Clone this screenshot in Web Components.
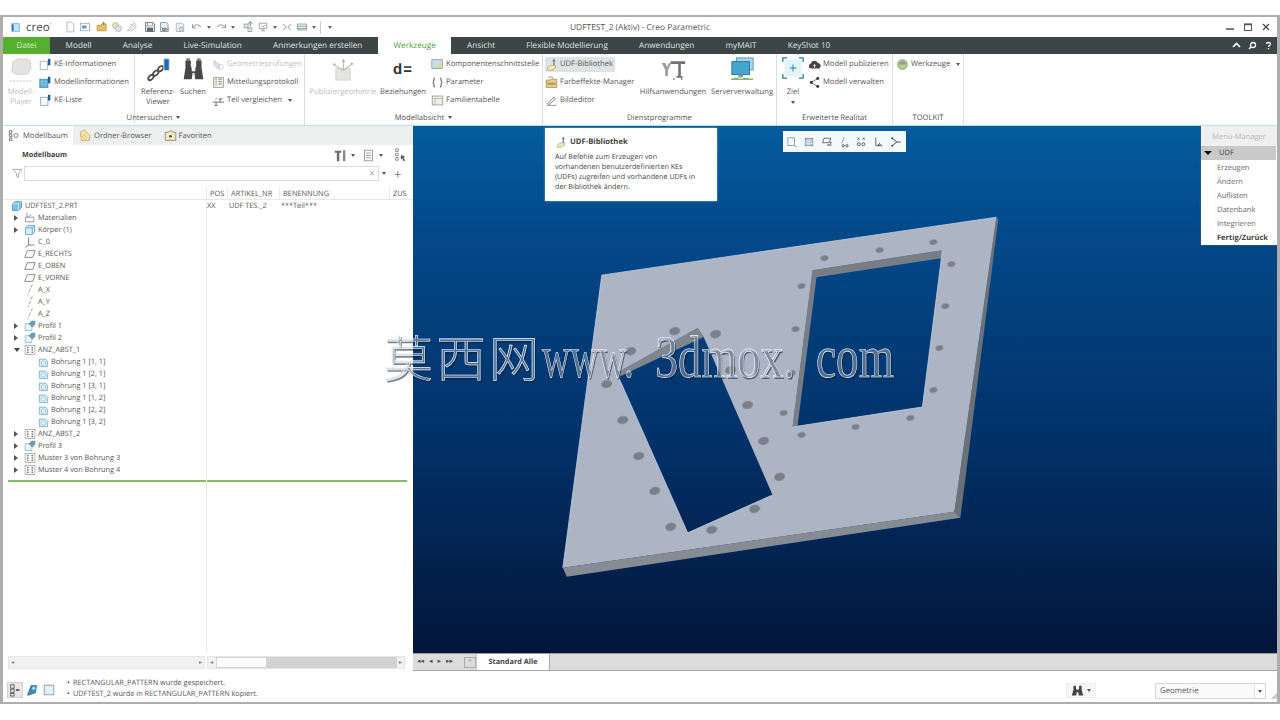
<!DOCTYPE html>
<html lang="de">
<head>
<meta charset="utf-8">
<title>Creo Parametric</title>
<style>
html, body { margin: 0; height: 720px; overflow: hidden; background: #fff; }
body { font: 7.6px/10px "Open Sans", "Liberation Sans", sans-serif; color: #555; text-rendering: geometricPrecision; }
</style>
</head>
<body>
<creo-app>
  <title-bar slot="top"></title-bar>
  <tab-bar slot="top"></tab-bar>
  <creo-ribbon slot="top">
    <ribbon-group label="Untersuchen" arrow w="302">
      <ribbon-big w="36" icon="player" off>Modell-<br>Player</ribbon-big>
      <ribbon-col w="95">
        <ribbon-item icon="keinfo">KE-Informationen</ribbon-item>
        <ribbon-item icon="modinfo">Modellinformationen</ribbon-item>
        <ribbon-item icon="keliste">KE-Liste</ribbon-item>
      </ribbon-col>
      <ribbon-sep></ribbon-sep>
      <ribbon-big w="38" ml="4" icon="chain">Referenz-<br>Viewer</ribbon-big>
      <ribbon-big w="32" icon="binoc">Suchen</ribbon-big>
      <ribbon-col w="90" ml="3">
        <ribbon-item icon="geo" off>Geometrieprüfungen</ribbon-item>
        <ribbon-item icon="proto">Mitteilungsprotokoll</ribbon-item>
        <ribbon-item icon="compare" arrow>Teil vergleichen</ribbon-item>
      </ribbon-col>
    </ribbon-group>
    <ribbon-group label="Modellabsicht" arrow w="238">
      <ribbon-big w="70" ml="3" icon="publish" off>Publiziergeometrie</ribbon-big>
      <ribbon-big w="50" glyph="d=">Beziehungen</ribbon-big>
      <ribbon-col w="112" ml="3">
        <ribbon-item icon="compif">Komponentenschnittstelle</ribbon-item>
        <ribbon-item icon="param">Parameter</ribbon-item>
        <ribbon-item icon="family">Familientabelle</ribbon-item>
      </ribbon-col>
    </ribbon-group>
    <ribbon-group label="Dienstprogramme" w="234">
      <ribbon-col w="94" ml="2">
        <ribbon-item icon="udf" hot>UDF-Bibliothek</ribbon-item>
        <ribbon-item icon="folder">Farbeffekte-Manager</ribbon-item>
        <ribbon-item icon="pencil">Bildeditor</ribbon-item>
      </ribbon-col>
      <ribbon-big w="68" icon="tools">Hilfsanwendungen</ribbon-big>
      <ribbon-big w="66" ml="2" icon="server">Serververwaltung</ribbon-big>
    </ribbon-group>
    <ribbon-group label="Erweiterte Realität" w="116">
      <ribbon-big w="30" ml="1" icon="ziel" s="22" drop>Ziel</ribbon-big>
      <ribbon-col w="82">
        <ribbon-item icon="cloud">Modell publizieren</ribbon-item>
        <ribbon-item icon="share">Modell verwalten</ribbon-item>
      </ribbon-col>
    </ribbon-group>
    <ribbon-group label="TOOLKIT" w="71">
      <ribbon-col w="68" ml="3">
        <ribbon-item icon="werk" arrow>Werkzeuge</ribbon-item>
      </ribbon-col>
    </ribbon-group>
  </creo-ribbon>

  <model-panel slot="left">
    <tree-row lvl="root" icon="part" pos="XX" nr="UDF TES._2" name="***Teil***">UDFTEST_2.PRT</tree-row>
    <tree-row arrow="r" icon="material">Materialien</tree-row>
    <tree-row arrow="r" icon="body">Körper (1)</tree-row>
    <tree-row icon="csys">C_0</tree-row>
    <tree-row icon="plane">E_RECHTS</tree-row>
    <tree-row icon="plane">E_OBEN</tree-row>
    <tree-row icon="plane">E_VORNE</tree-row>
    <tree-row icon="axis">A_X</tree-row>
    <tree-row icon="axis">A_Y</tree-row>
    <tree-row icon="axis">A_Z</tree-row>
    <tree-row arrow="r" icon="profile">Profil 1</tree-row>
    <tree-row arrow="r" icon="profile">Profil 2</tree-row>
    <tree-row arrow="d" icon="pattern">ANZ_ABST_1</tree-row>
    <tree-row lvl="1" icon="hole">Bohrung 1 [1, 1]</tree-row>
    <tree-row lvl="1" icon="hole">Bohrung 1 [2, 1]</tree-row>
    <tree-row lvl="1" icon="hole">Bohrung 1 [3, 1]</tree-row>
    <tree-row lvl="1" icon="hole">Bohrung 1 [1, 2]</tree-row>
    <tree-row lvl="1" icon="hole">Bohrung 1 [2, 2]</tree-row>
    <tree-row lvl="1" icon="hole">Bohrung 1 [3, 2]</tree-row>
    <tree-row arrow="r" icon="pattern">ANZ_ABST_2</tree-row>
    <tree-row arrow="r" icon="profile">Profil 3</tree-row>
    <tree-row arrow="r" icon="pattern">Muster 3 von Bohrung 3</tree-row>
    <tree-row arrow="r" icon="pattern">Muster 4 von Bohrung 4</tree-row>
  </model-panel>

  <graphics-view slot="right">
    <udf-tooltip heading="UDF-Bibliothek">Auf Befehle zum Erzeugen von<br>vorhandenen benutzerdefinierten KEs<br>(UDFs) zugreifen und vorhandene UDFs in<br>der Bibliothek ändern.</udf-tooltip>
    <view-toolbar></view-toolbar>
    <menu-manager></menu-manager>
  </graphics-view>

  <status-bar slot="bottom"></status-bar>
  <water-mark slot="over"></water-mark>
</creo-app>

<script>
const ICONS = {
  logo: '<rect x="2" y="2" width="12" height="12" fill="#4aa3d8"/><rect x="5" y="3" width="8" height="10" fill="#bfe3f5"/><rect x="3" y="4" width="2" height="8" fill="#2a6fa8"/>',
  qnew: '<path d="M4 1.5h6l3 3v10H4z" fill="#fff" stroke="#9aa3ab"/>',
  qopenw: '<rect x="2" y="3" width="12" height="10" fill="#fff" stroke="#9aa3ab"/><rect x="4" y="6" width="6" height="4" fill="#4e9bc7"/>',
  qfolder: '<path d="M1.5 6h5l1-2h6v9h-12z" fill="#e6c15e" stroke="#b08a35"/><path d="M10 1v4M8 3h4" stroke="#5a8f3a"/>',
  qsets: '<circle cx="6" cy="6" r="4" fill="#eadfb8" stroke="#b9b08a"/><circle cx="10" cy="10" r="4" fill="#dde6ea" stroke="#9db1ba"/>',
  qswitch: '<path d="M2 13l6-9 6 4-6 5z" fill="#ecebe2" stroke="#b9b9b0"/><path d="M10 2l3 3" stroke="#8a8a8a"/>',
  qsave: '<path d="M2 2h10l2 2v10H2z" fill="#dfe4e8" stroke="#5c6670"/><rect x="5" y="2.5" width="6" height="4" fill="#fff" stroke="#5c6670" stroke-width=".6"/><rect x="4" y="9" width="8" height="5" fill="#5c6670"/>',
  qsaveas: '<path d="M2 2h8l2 2v10H2z" fill="#e9edef" stroke="#79848c"/><rect x="4" y="9" width="6" height="5" fill="#89939b"/><path d="M9 9l5 5M14 9l-3 3" stroke="#888"/>',
  qsave2: '<path d="M3 3h8l2 2v9H3z" fill="#e9edef" stroke="#a2abb2"/><circle cx="10" cy="11" r="3" fill="#cfd6da" stroke="#a2abb2"/>',
  qundo: '<path d="M3 8c2-4 7-4 10 0" fill="none" stroke="#9aa3ab" stroke-width="1.4"/><path d="M2 4v5h5" fill="none" stroke="#9aa3ab" stroke-width="1.4"/>',
  qredo: '<path d="M13 8C11 4 6 4 3 8" fill="none" stroke="#9aa3ab" stroke-width="1.4"/><path d="M14 4v5H9" fill="none" stroke="#9aa3ab" stroke-width="1.4"/>',
  qregen: '<path d="M3 4h5v5H3zM8 9h5v5H8z" fill="#e8eff2" stroke="#7f8d96"/><path d="M11 1v6M8.5 3.5l2.5-2.5 2.5 2.5" fill="none" stroke="#5a8f3a" stroke-width="1.3"/>',
  qregen2: '<path d="M3 3h10v7H3z" fill="none" stroke="#7f8d96"/><path d="M5 13h6M8 10v3" stroke="#7f8d96"/><path d="M6 6l2 2 3-3" fill="none" stroke="#6ca34a"/>',
  qwin: '<path d="M3 4l4 4-4 4M13 4L9 8l4 4" fill="none" stroke="#808a92" stroke-width="1.2"/>',
  qlist: '<path d="M2 4h12v8H2z" fill="#f2f4f5" stroke="#7f8d96"/><path d="M2 7h12M2 10h12" stroke="#5da05f"/>',
  player: '<path d="M4 5l5-3h10l3 2 1 8-4 6H7L3 15z" fill="#e3e3e3" stroke="#d4d4d4"/><path d="M1 25h24" stroke="#bbb" stroke-dasharray="2 1.4"/>',
  keinfo: '<rect x="1.5" y="4" width="9" height="10" fill="#fff" stroke="#8eb2c8"/><rect x="11" y="1" width="3" height="8" fill="#1e5f99"/>',
  modinfo: '<rect x="1" y="4" width="10" height="10" fill="#58aee0" stroke="#3b88b8"/><path d="M1 7h10M1 10h10M4 4v10M8 4v10" stroke="#a5d5ef" stroke-width=".6"/><rect x="11" y="1" width="3" height="8" fill="#1e5f99"/>',
  keliste: '<rect x="2" y="4" width="9" height="10" fill="#f3f8fb" stroke="#7ea9c4"/><rect x="11" y="1" width="3" height="7" fill="#1e5f99"/>',
  chain: '<g fill="none" stroke="#4e4a47" stroke-width="2"><ellipse cx="5.5" cy="23" rx="3.5" ry="2.2" transform="rotate(-45 5.5 23)"/><ellipse cx="11" cy="18" rx="3.5" ry="2.2" transform="rotate(-45 11 18)"/><ellipse cx="16.5" cy="13" rx="3.5" ry="2.2" transform="rotate(-45 16.5 13)"/></g><rect x="20" y="2" width="6" height="13" fill="#1d6ab0" stroke="#cfe3f1"/>',
  binoc: '<path d="M5 4h6v6l1 3v3h4v-3l1-3V4h6v8l2 13h-9l-1-7h-2l-1 7H3l2-13z" fill="#4a4846"/><rect x="6" y="1.5" width="4" height="3" fill="#7d7a76"/><rect x="18" y="1.5" width="4" height="3" fill="#7d7a76"/>',
  geo: '<path d="M3 3l7 6-2 5-6-6z" fill="#e0e3e4" stroke="#c2c6c8"/><circle cx="11" cy="11" r="3" fill="none" stroke="#cbcfd1"/>',
  proto: '<rect x="2" y="2" width="12" height="12" fill="#f1efe5" stroke="#9a9a8c"/><path d="M4 4h2M4 7h2M4 10h2M8 4h4M8 7h4M8 10h4" stroke="#777"/>',
  compare: '<path d="M1 10h14M5 10v4M3 14h4M10 6v4M8 6h5" stroke="#555" fill="none"/><path d="M4 7l2-2" stroke="#4f9a3d"/>',
  publish: '<rect x="5" y="12" width="15" height="12" fill="#e4e4e2" stroke="#d4d4d2"/><path d="M13 14V3M13 14l9-7M13 14L3 8" stroke="#bdbdb9" stroke-width="1.3"/><path d="M11 5l2-3 2 3M20 6l3 0-1 3M4 6l-2 2 3 1" fill="#aeaeaa"/>',
  compif: '<rect x="1" y="2" width="13" height="11" fill="#c7dfe8" stroke="#8a9ca4"/><path d="M2 12l5-6 3 3 3-3v6z" fill="#cfe0a8"/>',
  param: '<path d="M5 2C3 2 4 7 2.5 8 4 9 3 14 5 14M11 2c2 0 1 5 2.5 6C12 9 13 14 11 14" fill="none" stroke="#3d3d3d" stroke-width="1.2"/>',
  family: '<rect x="1.5" y="2.5" width="13" height="11" fill="#f1efe9" stroke="#9a9a92"/><path d="M1.5 5.5h13M5 5.5v8" stroke="#b4b4aa"/>',
  udf: '<path d="M3 12l4-3h6v3l-4 3H3z" fill="#f0e6c0" stroke="#b9ab7a"/><path d="M11 9V2" stroke="#5f7f9f" stroke-width="1.6"/><path d="M9 4l2-3 2 3" fill="#5f7f9f"/>',
  folder: '<path d="M1.5 5h5l1-1h7v10h-13z" fill="#e9d08e" stroke="#a98a45"/><path d="M5 3V1h4v3" fill="#fff" stroke="#8f8f8f"/><rect x="3" y="8" width="10" height="3" fill="#7a6a48" opacity=".5"/>',
  pencil: '<path d="M2 14h12" stroke="#7e8f6d"/><path d="M3 12l8-8 2 2-8 7z" fill="#fff" stroke="#666"/>',
  tools: '<path d="M11 5h17v3h-5v14h2v2h-7v-2h2V8h-9z" fill="#6f7470"/><path d="M1 7h4l2 5 2-5h3l-4 8v7H5v-7z" fill="#979c98"/><circle cx="15" cy="25.5" r="1" fill="#777"/><circle cx="24" cy="25.5" r="1" fill="#777"/>',
  server: '<rect x="7" y="1" width="18" height="13" fill="#a9d3ea" stroke="#5d95b0"/><rect x="2" y="5" width="19" height="14" fill="#45a5cf" stroke="#2f7596"/><rect x="9" y="19" width="5" height="3" fill="#7f9a9f"/><path d="M1 24h24" stroke="#79b84e" stroke-width="1.5"/><path d="M4 23h5M14 23h6" stroke="#888"/>',
  ziel: '<rect x="3" y="3" width="20" height="20" fill="#e3f3f7"/><path d="M1 6V1h5M20 1h5v5M25 20v5h-5M6 25H1v-5" fill="none" stroke="#2d7f94" stroke-width="1.5"/><path d="M13 9v8M9 13h8" stroke="#2d8aa0" stroke-width="1.2"/>',
  cloud: '<path d="M4 13a3.2 3.2 0 0 1-.5-6.3A4.5 4.5 0 0 1 12 6a3.5 3.5 0 0 1 0 7z" fill="#444"/><path d="M8 12V8M6.5 9.5L8 8l1.5 1.5" stroke="#fff" fill="none"/>',
  share: '<path d="M12 3L4 8l8 5" fill="none" stroke="#555"/><circle cx="12" cy="3" r="1.8" fill="#333"/><circle cx="4" cy="8" r="1.8" fill="#333"/><circle cx="12" cy="13" r="1.8" fill="#333"/>',
  werk: '<circle cx="8" cy="8" r="6" fill="#b7cc8f" stroke="#7f9a63"/><path d="M4 8a4 4 0 0 1 8 0" fill="#9a9d94"/>',
  part: '<path d="M2 5l4-3h8v8l-4 4H2z" fill="#7cc2e6" stroke="#3d8fbc"/><path d="M2 5h8v9M10 5l4-3" fill="none" stroke="#d8eef8"/>',
  material: '<path d="M4 1v6M2 7h11v6H2z" fill="none" stroke="#7b7b7b"/><path d="M4 7l6-3" stroke="#5ea0c0"/>',
  body: '<path d="M2 5l3-3h9v9l-3 3H2z" fill="#d7ecf6" stroke="#4b98c2"/><path d="M2 5h9v9M11 5l3-3" fill="none" stroke="#4b98c2"/>',
  csys: '<path d="M6 2v10h8M6 12l-4 3" fill="none" stroke="#666"/><circle cx="6" cy="12" r="1" fill="#b58a3a"/>',
  plane: '<path d="M4.5 3.5H15l-3.5 9H1z" fill="#fbfbfb" stroke="#6b6b6b"/>',
  axis: '<path d="M11 1L5 15" stroke="#666" stroke-dasharray="3 1.5 1 1.5"/>',
  profile: '<rect x="1.5" y="5" width="9" height="9" fill="#eaf4f9" stroke="#7fb6d2"/><path d="M6 5l4-4h5v5l-4 4z" fill="#6b9eb6"/>',
  pattern: '<rect x="1.5" y="2" width="13" height="12" fill="#fff" stroke="#9a9a9a"/><path d="M4 5h2M10 5h2M4 8h2M10 8h2M4 11h2M10 11h2" stroke="#333" stroke-width="1.3"/>',
  hole: '<path d="M2 3h9l3 3v8H2z" fill="#d3e9f3" stroke="#62a6c6"/><circle cx="8" cy="9" r="3" fill="#f4f4ea" stroke="#67a6bf" stroke-dasharray="2 1"/>',
  tabtree: '<path d="M3 2h3v3H3zM3 6.5h3v3H3zM3 11h3v3H3z" fill="none" stroke="#666"/><circle cx="11" cy="8" r="2.5" fill="none" stroke="#666"/>',
  tabfolder: '<path d="M1.5 4l5-3 7 7-1 6H3z" fill="#f3e2ac" stroke="#c5a75b"/><path d="M5 6l5 5M4 9l4 4" stroke="#d6bb72"/>',
  tabfav: '<path d="M1.5 4h4l1-1.5h4l1 1.5h3v10h-13z" fill="#f3e8c4" stroke="#8d8463"/><circle cx="8" cy="9" r="1.6" fill="#444"/>',
  hammer: '<path d="M1 2h8v2.5H6.5V15h-3V4.5H1z" fill="#6e6c67"/><path d="M11 1.5h3V15h-3z" fill="#8a8882"/>',
  listdoc: '<rect x="3" y="1.5" width="10" height="13" fill="#fff" stroke="#8c8c8c"/><path d="M5 5h6M5 8h6M5 11h6" stroke="#8c8c8c"/>',
  treeset: '<path d="M3 1h3v3H3zM3 6h3v3H3zM3 11h3v3H3z" fill="none" stroke="#888"/><path d="M9 8l5 2-2 1 2 3-2 1-1-3-2 1z" fill="#555"/>',
  funnel: '<path d="M1.5 2h13L9.5 8v6l-3-2V8z" fill="#fff" stroke="#8a8a8a"/>',
  v1: '<rect x="2.5" y="2.5" width="9" height="10" fill="none" stroke="#7d8b94"/><circle cx="13" cy="14" r=".8" fill="#666"/>',
  v2: '<rect x="3" y="3" width="10" height="10" fill="#b9cdd8" stroke="#6d8a9b"/><path d="M3 7h10M3 10h10M7 3v10" stroke="#e8f0f4" stroke-width=".7"/>',
  v3: '<path d="M4 3h9l-2 6H2z" fill="none" stroke="#444"/><path d="M8 12h6" stroke="#444" stroke-width="1.3"/><circle cx="13" cy="9" r="1.2" fill="#666"/>',
  v4: '<path d="M8 2L5 10" stroke="#444" stroke-dasharray="2 1"/><circle cx="7" cy="13" r="1.5" fill="none" stroke="#333"/><circle cx="12" cy="13" r="1.5" fill="none" stroke="#333"/>',
  v5: '<path d="M3 2l3 3M6 2L3 5M10 2l3 3M13 2l-3 3" stroke="#444"/><circle cx="5" cy="11" r="2" fill="none" stroke="#333"/><circle cx="11" cy="11" r="2" fill="none" stroke="#333"/>',
  v6: '<path d="M5 2v11h9" fill="none" stroke="#444"/><path d="M9 9l3 3" stroke="#444"/><circle cx="9" cy="12" r="1.2" fill="#444"/>',
  v7: '<path d="M3 3l6 5-6 5M9 8h5" fill="none" stroke="#333" stroke-width="1.2"/><circle cx="3" cy="3" r="1.2" fill="#333"/><circle cx="3" cy="13" r="1.2" fill="#333"/>',
  st1: '<path d="M3 2h4v4H3zM3 7h4v4H3zM3 12h4v3H3z" fill="none" stroke="#555"/><path d="M9 8h4" stroke="#555" stroke-width="2"/>',
  st2: '<path d="M3 14L7 3h6l-1 8z" fill="#3f8cc4" stroke="#23689c"/><circle cx="10" cy="6" r="2" fill="#a8d8ef"/>',
  st3: '<rect x="2.5" y="2.5" width="11" height="11" fill="#e6f0f5" stroke="#7f9aaa"/>',
  bino: '<path d="M3 2h3v3.5l1 1.5h2l1-1.5V2h3v5l2 7H9.5L9 10H7l-.5 4H1l2-7z" fill="#454341"/>'
};

const VIEW = { player: 26, chain: 28, binoc: 28, publish: 26, tools: 29, server: 27, ziel: 26 };

class CreoIcon extends HTMLElement {
  connectedCallback() {
    const n = this.getAttribute('n');
    const s = this.getAttribute('s') || 13;
    const v = VIEW[n] || 16;
    this.attachShadow({mode: 'open'}).innerHTML = `
      <style>
        :host { display: inline-flex; flex: none; width: ${s}px; height: ${s}px; }
        svg { width: 100%; height: 100%; display: block; }
      </style>
      <svg viewBox="0 0 ${v} ${v}" xmlns="http://www.w3.org/2000/svg">${ICONS[n] || ''}</svg>`;
  }
}
customElements.define('creo-icon', CreoIcon);

class CreoApp extends HTMLElement {
  constructor() {
    super();
    this.attachShadow({mode: 'open'}).innerHTML = `
      <style>
        :host {
          display: flex; flex-direction: column; box-sizing: border-box; position: relative;
          width: 1280px; height: 689px; margin-top: 15px;
          border: solid #aeaeae; border-width: 2px 3px 2px 3px; background: #fff;
        }
        .main { display: flex; flex: 1; min-height: 0; }
        .left { display: flex; width: 410px; flex: none; }
        .right { display: flex; flex: 1; min-width: 0; }
        .over { position: absolute; left: 380px; top: 308px; pointer-events: none; }
      </style>
      <slot name="top"></slot>
      <div class="main">
        <div class="left"><slot name="left"></slot></div>
        <div class="right"><slot name="right"></slot></div>
      </div>
      <slot name="bottom"></slot>
      <div class="over"><slot name="over"></slot></div>`;
  }
}
customElements.define('creo-app', CreoApp);

class TitleBar extends HTMLElement {
  connectedCallback() {
    const q = [['qnew',0],['qopenw',0],['qfolder',2],['qsets',0],['qswitch',0],['qsave',3],['qsaveas',0],['qsave2',0],['qundo',2],['a',0],['qredo',0],['a',0],['qregen',3],['qregen2',0],['a',0],['qwin',0],['qlist',0],['a',0]];
    const tools = q.map(([n, m]) => n === 'a'
      ? `<span class="arrow"></span>`
      : `<creo-icon n="${n}" s="12" style="margin-left:${m}px"></creo-icon>`).join('');
    this.attachShadow({mode: 'open'}).innerHTML = `
      <style>
        :host { display: flex; align-items: center; height: 20px; position: relative; flex: none; color: #555; }
        .logo { display: flex; align-items: center; gap: 5px; margin-left: 7px; width: 46px; font: 11.5px "Open Sans", sans-serif; color: #3e4a50; }
        .tools { display: flex; align-items: center; margin-left: 8px; gap: 3px; }
        .arrow { width: 0; height: 0; border: 2.5px solid transparent; border-top: 3px solid #666; border-bottom: 0; margin: 0 1px; }
        .sep { width: 1px; height: 13px; background: #ccc; margin: 0 3px 0 0; }
        .title { text-align: center; position: absolute; left: 0; right: 0; top: 6px; font-size: 8.4px; color: #555; pointer-events: none; }
        .win { margin-left: auto; display: flex; align-items: center; gap: 8px; padding-right: 6px; }
        .win svg { width: 10px; height: 10px; display: block; }
      </style>
      <div class="logo"><creo-icon n="logo" s="11"></creo-icon><span>creo<sup style="font-size:4px">°</sup></span></div>
      <div class="tools">${tools}<span class="sep"></span><span class="arrow"></span></div>
      <div class="title">UDFTEST_2 (Aktiv) - Creo Parametric</div>
      <div class="win">
        <svg viewBox="0 0 10 10"><path d="M1 7h8" stroke="#444" stroke-width="1.4"/></svg>
        <svg viewBox="0 0 10 10"><rect x="1.5" y="2" width="7" height="6.5" fill="none" stroke="#555"/><path d="M1.5 2.5h7" stroke="#555" stroke-width="1.5"/></svg>
        <svg viewBox="0 0 10 10"><path d="M2 2l6 6M8 2L2 8" stroke="#444" stroke-width="1.2"/></svg>
      </div>`;
  }
}
customElements.define('title-bar', TitleBar);

class TabBar extends HTMLElement {
  connectedCallback() {
    const names = ['Modell','Analyse','Live-Simulation','Anmerkungen erstellen','Werkzeuge','Ansicht','Flexible Modellierung','Anwendungen','myMAIT','KeyShot 10'];
    this.attachShadow({mode: 'open'}).innerHTML = `
      <style>
        :host { display: flex; align-items: stretch; height: 17px; flex: none; background: #3d4546; color: #dfe3e3; font-size: 8.2px; }
        .file { width: 47px; background: #55b02f; color: #d6f0c4; display: flex; align-items: center; justify-content: center; }
        .tab { display: flex; align-items: center; padding: 1px 15.6px 0; white-space: nowrap; }
        .tab.on { background: #fff; color: #55a236; }
        .right { margin-left: auto; display: flex; align-items: center; gap: 7px; padding-right: 4px; }
        .right svg { width: 9px; height: 9px; display: block; }
      </style>
      <div class="file">Datei</div>
      ${names.map(n => `<div class="tab${n === 'Werkzeuge' ? ' on' : ''}">${n}</div>`).join('')}
      <div class="right">
        <svg viewBox="0 0 9 9"><path d="M1 6l3.5-3.5L8 6" fill="none" stroke="#fff" stroke-width="1.6"/></svg>
        <svg viewBox="0 0 9 9"><circle cx="5" cy="4" r="2.5" fill="none" stroke="#fff" stroke-width="1.3"/><path d="M3 6L1 8" stroke="#fff" stroke-width="1.5"/></svg>
        <svg viewBox="0 0 9 9"><path d="M2.5 3C2.5 1 6.5 1 6.5 3c0 1.5-2 1.5-2 3M4.5 7v1.3" fill="none" stroke="#fff" stroke-width="1.3"/></svg>
      </div>`;
  }
}
customElements.define('tab-bar', TabBar);

class CreoRibbon extends HTMLElement {
  constructor() {
    super();
    this.attachShadow({mode: 'open'}).innerHTML = `
      <style>
        :host { display: flex; height: 72px; flex: none; box-sizing: border-box; border-bottom: 1px solid #b9e0ee; background: #fff; }
      </style>
      <slot></slot>`;
  }
}
customElements.define('creo-ribbon', CreoRibbon);

class RibbonGroup extends HTMLElement {
  connectedCallback() {
    const w = this.getAttribute('w');
    const arrow = this.hasAttribute('arrow') ? '<span class="arrow"></span>' : '';
    this.attachShadow({mode: 'open'}).innerHTML = `
      <style>
        :host { display: flex; flex-direction: column; flex: none; box-sizing: border-box; width: ${w}px; border-right: 1px solid #dadddd; }
        .body { display: flex; flex: 1; min-height: 0; }
        .label { height: 15px; flex: none; display: flex; align-items: center; justify-content: center; gap: 4px; color: #555; }
        .arrow { width: 0; height: 0; border: 2.5px solid transparent; border-top: 3px solid #555; border-bottom: 0; }
      </style>
      <div class="body"><slot></slot></div>
      <div class="label">${this.getAttribute('label')}${arrow}</div>`;
  }
}
customElements.define('ribbon-group', RibbonGroup);

class RibbonSep extends HTMLElement {
  constructor() {
    super();
    this.attachShadow({mode: 'open'}).innerHTML = `
      <style>:host { display: block; flex: none; width: 1px; height: 70px; background: #dadddd; }</style>`;
  }
}
customElements.define('ribbon-sep', RibbonSep);

class RibbonBig extends HTMLElement {
  connectedCallback() {
    const icon = this.getAttribute('icon');
    const glyph = this.getAttribute('glyph');
    const drop = this.hasAttribute('drop') ? '<span class="arrow"></span>' : '';
    this.attachShadow({mode: 'open'}).innerHTML = `
      <style>
        :host {
          display: flex; flex-direction: column; align-items: center; flex: none; white-space: nowrap;
          width: ${this.getAttribute('w')}px; margin-left: ${this.getAttribute('ml') || 0}px;
          color: ${this.hasAttribute('off') ? '#bcbcbc' : '#555'}; text-align: center;
        }
        .pic { height: 33px; padding-top: 3px; box-sizing: border-box; display: flex; justify-content: center; flex: none; }
        .glyph { font: 700 15px/26px "Liberation Sans", sans-serif; color: #333; letter-spacing: 1px; }
        .arrow { width: 0; height: 0; border: 2.5px solid transparent; border-top: 3px solid #555; border-bottom: 0; margin-top: 4px; }
      </style>
      <div class="pic">${glyph ? `<span class="glyph">${glyph}</span>` : `<creo-icon n="${icon}" s="${this.getAttribute('s') || 25}"></creo-icon>`}</div>
      <div><slot></slot></div>${drop}`;
  }
}
customElements.define('ribbon-big', RibbonBig);

class RibbonCol extends HTMLElement {
  connectedCallback() {
    this.attachShadow({mode: 'open'}).innerHTML = `
      <style>
        :host {
          display: flex; flex-direction: column; flex: none; padding-top: 1px;
          width: ${this.getAttribute('w')}px; margin-left: ${this.getAttribute('ml') || 0}px;
        }
      </style>
      <slot></slot>`;
  }
}
customElements.define('ribbon-col', RibbonCol);

class RibbonItem extends HTMLElement {
  connectedCallback() {
    const arrow = this.hasAttribute('arrow') ? '<span class="arrow"></span>' : '';
    this.attachShadow({mode: 'open'}).innerHTML = `
      <style>
        :host { display: flex; align-items: center; height: 18px; flex: none; white-space: nowrap; color: ${this.hasAttribute('off') ? '#c2c2c2' : '#555'}; }
        .in { display: flex; align-items: center; gap: 2px; height: 15px; padding-right: 2px; background: ${this.hasAttribute('hot') ? '#dfe3e4' : 'none'}; }
        .arrow { width: 0; height: 0; border: 2.5px solid transparent; border-top: 3px solid #555; border-bottom: 0; margin-left: 4px; }
      </style>
      <div class="in"><creo-icon n="${this.getAttribute('icon')}" s="13"></creo-icon><slot></slot>${arrow}</div>`;
  }
}
customElements.define('ribbon-item', RibbonItem);

class ModelPanel extends HTMLElement {
  constructor() {
    super();
    this.attachShadow({mode: 'open'}).innerHTML = `
      <style>
        :host { display: flex; flex-direction: column; width: 410px; flex: none; background: #fff; }
        .tabs { display: flex; height: 19px; flex: none; background: #edefef; align-items: stretch; }
        .tab { display: flex; align-items: center; gap: 2px; padding: 0 6px; }
        .tab.on { background: #fff; width: 70px; box-sizing: border-box; padding-left: 4px; gap: 3px; }
        .head { height: 20px; flex: none; display: flex; align-items: center; padding: 0 6px 0 19px; font-weight: 700; color: #444; font-size: 7.2px; }
        .tools { margin-left: auto; display: flex; align-items: center; }
        .arrow { width: 0; height: 0; border: 2.5px solid transparent; border-top: 3px solid #555; border-bottom: 0; margin: 0 7px 0 4px; }
        .arrow.wide { margin-right: 10px; }
        .filter { height: 17px; flex: none; display: flex; align-items: center; }
        .filter .box { width: 355px; height: 15px; margin-left: 1px; box-sizing: border-box; border: 1px solid #dcdcdc; display: flex; align-items: center; justify-content: flex-end; padding-right: 3px; color: #aaa; }
        .filter .plus { margin-left: 8px; color: #777; font-size: 13px; }
        .cols { margin-top: 5px; height: 12px; flex: none; display: flex; align-items: center; border-bottom: 1px solid #e8e8e8; color: #555; white-space: nowrap; font-size: 7.4px; }
        .cols span { box-sizing: border-box; padding-left: 3px; overflow: hidden; border-left: 1px solid #eaeaea; height: 12px; line-height: 14px; }
        .body { flex: 1; min-height: 0; position: relative; }
        .rule { position: absolute; left: 203px; top: 0; bottom: 0; width: 1px; background: #ececec; }
        .end { height: 4px; border-bottom: 2px solid #86ba64; margin: 0 6px 0 5px; }
        .tree { font-size: 7.3px; }
        .scroll { height: 18px; flex: none; display: flex; align-items: center; font-size: 6px; color: #888; }
        .track { height: 13px; box-sizing: border-box; background: #f1f1f1; border: 1px solid #e6e6e6; display: flex; align-items: center; justify-content: space-between; padding: 0 2px; }
        .thumb { width: 51px; height: 11px; box-sizing: border-box; background: #fbfbfb; border: 1px solid #d4d4d4; }
        .bar { flex: 1; height: 11px; background: #d2d2d2; }
      </style>
      <div class="tabs">
        <div class="tab on"><creo-icon n="tabtree" s="13"></creo-icon>Modellbaum</div>
        <div class="tab"><creo-icon n="tabfolder" s="13"></creo-icon>Ordner-Browser</div>
        <div class="tab" style="padding-left:6px"><creo-icon n="tabfav" s="13"></creo-icon>Favoriten</div>
      </div>
      <div class="head">Modellbaum
        <div class="tools"><creo-icon n="hammer" s="13"></creo-icon><span class="arrow"></span><creo-icon n="listdoc" s="13"></creo-icon><span class="arrow wide"></span><creo-icon n="treeset" s="14"></creo-icon></div>
      </div>
      <div class="filter"><creo-icon n="funnel" s="11" style="margin-left:9px"></creo-icon><div class="box">✕</div><span class="arrow" style="margin:0 0 0 3px"></span><span class="plus">+</span></div>
      <div class="cols">
        <span style="width:203px;border:0"></span>
        <span style="width:21px">POS</span>
        <span style="width:52px">ARTIKEL_NR</span>
        <span style="width:110px">BENENNUNG</span>
        <span style="width:20px">ZUS</span>
      </div>
      <div class="body">
        <div class="rule"></div>
        <div class="tree"><slot></slot></div>
        <div class="end"></div>
      </div>
      <div class="scroll">
        <div class="track" style="width:197px;margin-left:5px"><span>◂</span><span>▸</span></div>
        <div class="track" style="width:198px;margin-left:2px;padding:0 0 0 2px"><span>◂</span><span class="thumb" style="margin-left:3px"></span><span class="bar"></span><span style="padding:0 2px">▸</span></div>
      </div>`;
  }
}
customElements.define('model-panel', ModelPanel);

class TreeRow extends HTMLElement {
  connectedCallback() {
    const lvl = this.getAttribute('lvl') || '0';
    const arrow = this.getAttribute('arrow');
    const extra = this.getAttribute('pos');
    const ind = lvl === 'root' ? 8 : lvl === '1' ? 35 : 11;
    const icon = this.getAttribute('icon');
    const twist = lvl === '0'
      ? `<span class="tw ${arrow || ''}"></span>`
      : '';
    this.attachShadow({mode: 'open'}).innerHTML = `
      <style>
        :host { display: flex; align-items: center; height: 12px; color: #555; white-space: nowrap; }
        .name { display: flex; align-items: center; gap: 2px; width: 203px; flex: none; box-sizing: border-box; padding-left: ${ind}px; }
        .tw { width: 10px; flex: none; margin-right: -2px; position: relative; height: 6px; }
        .tw.r::before { content: ''; position: absolute; left: 0; top: 0; border: 3px solid transparent; border-left: 4px solid #555; border-right: 0; }
        .tw.d::before { content: ''; position: absolute; left: 0; top: 1px; border: 3px solid transparent; border-top: 4px solid #444; border-bottom: 0; }
        .cell { box-sizing: border-box; padding-left: 1px; overflow: hidden; }
      </style>
      <div class="name">${twist}<creo-icon n="${icon}" s="${lvl === '1' ? 11 : 12}"></creo-icon><slot></slot></div>
      ${extra ? `<div class="cell" style="width:22px;padding-left:1px">${extra}</div><div class="cell" style="width:52px">${this.getAttribute('nr')}</div><div class="cell">${this.getAttribute('name')}</div>` : ''}`;
  }
}
customElements.define('tree-row', TreeRow);

class GraphicsView extends HTMLElement {
  connectedCallback() {
    const big = [[675,331],[716,334],[631,351],[607,384],[623,420],[639,456],[655,491],[671,527],[712,530],[755,509],[780,477],[764,441],[748,405],[731,370]];
    const small = [[934,242],[880,250],[825,258],[802,286],[796,329],[792,373],[784,413],[802,435],[856,427],[911,418],[934,390],[940,348],[946,306],[952,264]];
    const hole = (x, y, rx, ry) => `<ellipse cx="${x}" cy="${y}" rx="${rx}" ry="${ry}" transform="rotate(-12 ${x} ${y})" fill="#7b8088" stroke="#999ea8" stroke-width=".6"/>`;
    this.attachShadow({mode: 'open'}).innerHTML = `
      <style>
        :host { display: flex; flex-direction: column; flex: 1; min-width: 0; }
        .scene { flex: 1; min-height: 0; position: relative; overflow: hidden; background: linear-gradient(#045c9f 0%, #03498a 20%, #023168 60%, #03163a 100%); }
        svg { position: absolute; inset: 0; width: 100%; height: 100%; display: block; }
        .bar { height: 18px; flex: none; display: flex; align-items: stretch; background: #dcdcdc; box-sizing: border-box; border-top: 1px solid #9a9a9a; border-bottom: 1px solid #a8a8a8; color: #444; }
        .nav { display: flex; align-items: center; width: 63px; padding-left: 4px; box-sizing: border-box; gap: 5px; font-size: 7px; color: #555; }
        .nav b { display: inline-flex; width: 12px; height: 11px; box-sizing: border-box; border: 1px solid #aaa; align-items: center; justify-content: center; font-weight: 400; color: #999; margin-left: 6px; }
        .sheet { width: 72px; background: #fff; display: flex; align-items: center; justify-content: center; font-weight: 700; font-size: 7.3px; color: #444; border-right: 1px solid #a8a8a8; border-left: 1px solid #ccc; }
      </style>
      <div class="scene">
        <svg viewBox="413 126 865 527" xmlns="http://www.w3.org/2000/svg">
          <polygon points="955,512 997,217 999,219 961,518" fill="#6c7178"/>
          <polygon points="563,568 955,512 961,518 567,577" fill="#878c94"/>
          <path d="M813,270 L943,250 L923,407 L793,427 Z M817,277 L798,426 L923,407 L942,258 Z" fill="#797e86" fill-rule="evenodd"/>
          <path d="M698,328 L617,373 L619,377 L704,337 Z" fill="#81868e"/>
          <path d="M602,275 L997,217 L955,512 L563,568 Z M813,270 L793,427 L923,407 L943,250 Z M698,328 L617,373 L688,533 L773,495 L704,337 Z"
                fill="#adb5c5" fill-rule="evenodd"/>
          <path d="M602,275 L997,217 M602,275 L563,568 M943,250 L923,407 M793,427 L923,407 M688,533 L773,495 M617,373 L688,533" fill="none" stroke="#bcd0e8" stroke-width=".8"/>
          ${big.map(([x, y]) => hole(x, y, 5.5, 4)).join('')}
          ${small.map(([x, y]) => hole(x, y, 4, 2.8)).join('')}
        </svg>
        <slot></slot>
      </div>
      <div class="bar">
        <div class="nav"><span>◂◂</span><span>◂</span><span>▸</span><span>▸▸</span><b>+</b></div>
        <div class="sheet">Standard Alle</div>
      </div>`;
  }
}
customElements.define('graphics-view', GraphicsView);

class UdfTooltip extends HTMLElement {
  connectedCallback() {
    this.attachShadow({mode: 'open'}).innerHTML = `
      <style>
        :host { position: absolute; left: 132px; top: 2px; width: 172px; height: 73px; box-sizing: border-box; padding: 7px 10px; background: #fff; box-shadow: 0 0 2px rgba(150,190,220,.9); color: #444; font-size: 7.2px; white-space: nowrap; }
        .h { display: flex; align-items: center; gap: 3px; height: 13px; font-weight: 700; font-size: 7.7px; margin-bottom: 4px; color: #444; }
      </style>
      <div class="h"><creo-icon n="udf" s="12"></creo-icon>${this.getAttribute('heading')}</div>
      <slot></slot>`;
  }
}
customElements.define('udf-tooltip', UdfTooltip);

class ViewToolbar extends HTMLElement {
  constructor() {
    super();
    const ids = ['v1','v2','v3','v4','v5','v6','v7'];
    this.attachShadow({mode: 'open'}).innerHTML = `
      <style>
        :host { position: absolute; left: 370px; top: 5px; width: 123px; height: 21px; box-sizing: border-box; padding-left: 3px; display: flex; align-items: center; gap: 5.3px; background: #f4f9fb; }
      </style>
      ${ids.map(i => `<creo-icon n="${i}" s="12"></creo-icon>`).join('')}`;
  }
}
customElements.define('view-toolbar', ViewToolbar);

class MenuManager extends HTMLElement {
  constructor() {
    super();
    const items = ['Erzeugen','Ändern','Auflisten','Datenbank','Integrieren'];
    this.attachShadow({mode: 'open'}).innerHTML = `
      <style>
        :host { position: absolute; right: 0; top: 0; width: 76px; height: 119px; box-sizing: border-box; background: #fff; box-shadow: 0 0 2px rgba(120,120,120,.6); color: #666; display: flex; flex-direction: column; font-size: 7.5px; }
        .t { height: 20px; box-sizing: border-box; padding-top: 2px; background: #efefef; display: flex; align-items: center; justify-content: center; color: #b7b7b7; flex: none; }
        .u { height: 14px; background: #c9c9c9; display: flex; align-items: center; gap: 7px; padding-left: 3px; color: #444; flex: none; margin-right: 1px; }
        .u i { width: 0; height: 0; border: 4px solid transparent; border-top: 4px solid #111; border-bottom: 0; }
        .i { height: 14px; box-sizing: border-box; padding: 1px 0 0 16px; display: flex; align-items: center; flex: none; }
        .i.b { font-weight: 700; color: #444; }
      </style>
      <div class="t">Menü-Manager</div>
      <div class="u"><i></i>UDF</div>
      ${items.map(i => `<div class="i">${i}</div>`).join('')}
      <div class="i b">Fertig/Zurück</div>`;
  }
}
customElements.define('menu-manager', MenuManager);

class StatusBar extends HTMLElement {
  constructor() {
    super();
    this.attachShadow({mode: 'open'}).innerHTML = `
      <style>
        :host { display: flex; align-items: center; height: 31px; flex: none; background: #fff; color: #555; position: relative; font-size: 7.3px; }
        .tools { display: flex; align-items: center; margin: 6px 0 0 5px; gap: 3px; width: 59px; }
        .tools creo-icon:first-child { background: #e6e6e6; box-shadow: 0 0 0 1px #d0d0d0; }
        .msg { line-height: 11px; margin-top: 4px; }
        .msg div::before { content: "•"; display: inline-block; width: 6px; color: #333; }
        .right { margin-left: auto; display: flex; align-items: center; margin-top: 8px; }
        .bino { display: flex; align-items: center; gap: 3px; width: 30px; height: 15px; box-sizing: border-box; padding-left: 4px; border: 1px solid #eee; background: #f6f6f6; }
        .arrow { width: 0; height: 0; border: 2.5px solid transparent; border-top: 3px solid #555; border-bottom: 0; }
        .sel { width: 111px; height: 16px; margin-left: 59px; box-sizing: border-box; border: 1px solid #d6d6d6; background: #fafafa; display: flex; align-items: center; padding: 1px 0 0 4px; justify-content: space-between; font-size: 7.8px; }
        .sel span { display: flex; width: 10px; height: 100%; align-items: center; justify-content: center; background: #fff; border-left: 1px solid #ddd; }
        .grip { width: 11px; height: 16px; background: linear-gradient(135deg, transparent 60%, #cfcfcf 60%, #cfcfcf 100%) no-repeat right 0 bottom 0 / 8px 8px; }
      </style>
      <div class="tools"><creo-icon n="st1" s="14"></creo-icon><creo-icon n="st2" s="14"></creo-icon><creo-icon n="st3" s="14"></creo-icon></div>
      <div class="msg">
        <div>RECTANGULAR_PATTERN wurde gespeichert.</div>
        <div>UDFTEST_2 wurde in RECTANGULAR_PATTERN kopiert.</div>
      </div>
      <div class="right">
        <div class="bino"><creo-icon n="bino" s="13"></creo-icon><span class="arrow"></span></div>
        <div class="sel">Geometrie<span><i class="arrow"></i></span></div>
        <div class="grip"></div>
      </div>`;
  }
}
customElements.define('status-bar', StatusBar);

class WaterMark extends HTMLElement {
  constructor() {
    super();
    this.attachShadow({mode: 'open'}).innerHTML = `
      <style>
        :host { display: flex; align-items: baseline; white-space: nowrap; height: 70px;
          color: rgba(170,190,215,.45); -webkit-text-stroke: .6px #f4f8fb; text-shadow: 1.5px 1.5px 0 rgba(20,30,50,.55); }
        .han { font: 300 50px/62px "Noto Sans CJK SC", sans-serif; letter-spacing: 3px; }
        .lat { display: inline-block; font: 60px/62px "Liberation Serif", serif; transform-origin: 0 50%; }
      </style>
      <span class="han">莫西网</span><span class="lat" style="width:94px;transform:scaleX(.65)">www.</span><span style="width:19px"> </span><span class="lat" style="width:140px;transform:scaleX(.77)">3dmox.</span><span style="width:21px"> </span><span class="lat" style="width:78px;transform:scaleX(.755)">com</span>`;
  }
}
customElements.define('water-mark', WaterMark);
</script>
</body>
</html>
